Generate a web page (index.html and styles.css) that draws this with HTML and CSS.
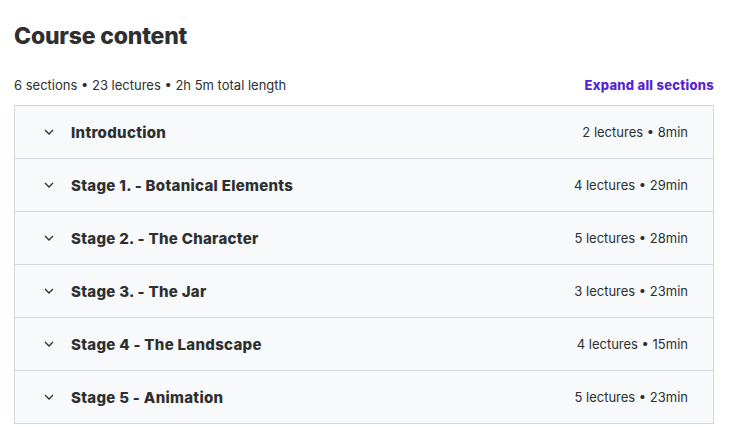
FILE: index.html
```html
<!DOCTYPE html>
<html>
<head>
<meta charset="utf-8">
<link rel="stylesheet" href="styles.css">
</head>
<body>
<div class="page">
  <h2 class="title">Course content</h2>
  <div class="meta">
    <span>6 sections • 23 lectures • 2h 5m total length</span>
    <a class="expand">Expand all sections</a>
  </div>
  <div class="list">
    <div class="row"><svg class="chev" viewBox="0 0 10 6"><path d="M1 1l4 4 4-4" fill="none" stroke="#2d2f31" stroke-width="1.3"/></svg><span class="name">Introduction</span><span class="info">2 lectures • 8min</span></div>
    <div class="row"><svg class="chev" viewBox="0 0 10 6"><path d="M1 1l4 4 4-4" fill="none" stroke="#2d2f31" stroke-width="1.3"/></svg><span class="name">Stage 1. - Botanical Elements</span><span class="info">4 lectures • 29min</span></div>
    <div class="row"><svg class="chev" viewBox="0 0 10 6"><path d="M1 1l4 4 4-4" fill="none" stroke="#2d2f31" stroke-width="1.3"/></svg><span class="name">Stage 2. - The Character</span><span class="info">5 lectures • 28min</span></div>
    <div class="row"><svg class="chev" viewBox="0 0 10 6"><path d="M1 1l4 4 4-4" fill="none" stroke="#2d2f31" stroke-width="1.3"/></svg><span class="name">Stage 3. - The Jar</span><span class="info">3 lectures • 23min</span></div>
    <div class="row"><svg class="chev" viewBox="0 0 10 6"><path d="M1 1l4 4 4-4" fill="none" stroke="#2d2f31" stroke-width="1.3"/></svg><span class="name">Stage 4 - The Landscape</span><span class="info">4 lectures • 15min</span></div>
    <div class="row"><svg class="chev" viewBox="0 0 10 6"><path d="M1 1l4 4 4-4" fill="none" stroke="#2d2f31" stroke-width="1.3"/></svg><span class="name">Stage 5 - Animation</span><span class="info">5 lectures • 23min</span></div>
  </div>
</div>
</body>
</html>
```
FILE: styles.css
```css
* { box-sizing: border-box; }
body {
  margin: 0;
  background: #fff;
  font-family: Inter, "Noto Sans", sans-serif;
  color: #2d2f31;
}
.page {
  width: 730px;
  padding: 20px 16px 0 14px;
}
.title {
  margin: 0;
  font-size: 23px;
  font-weight: 800;
  letter-spacing: -0.2px;
  line-height: 32px;
}
.meta {
  display: flex;
  justify-content: space-between;
  align-items: center;
  margin-top: 24px;
  height: 18px;
  font-size: 13px;
}
.expand {
  color: #5624d0;
  font-weight: 800;
  font-size: 13px;
  letter-spacing: 0.27px;
}
.list {
  margin-top: 11px;
  border: 1px solid #d1d7dc;
  border-bottom: none;
}
.row {
  display: flex;
  align-items: center;
  height: 53px;
  padding: 0 25px 0 29px;
  background: #f7f9fa;
  border-bottom: 1px solid #d1d7dc;
}
.chev {
  width: 10px;
  height: 6px;
  margin-right: 17px;
}
.name {
  font-size: 15px;
  font-weight: 800;
  letter-spacing: 0.3px;
  flex: 1;
}
.info {
  font-size: 13px;
}
```
